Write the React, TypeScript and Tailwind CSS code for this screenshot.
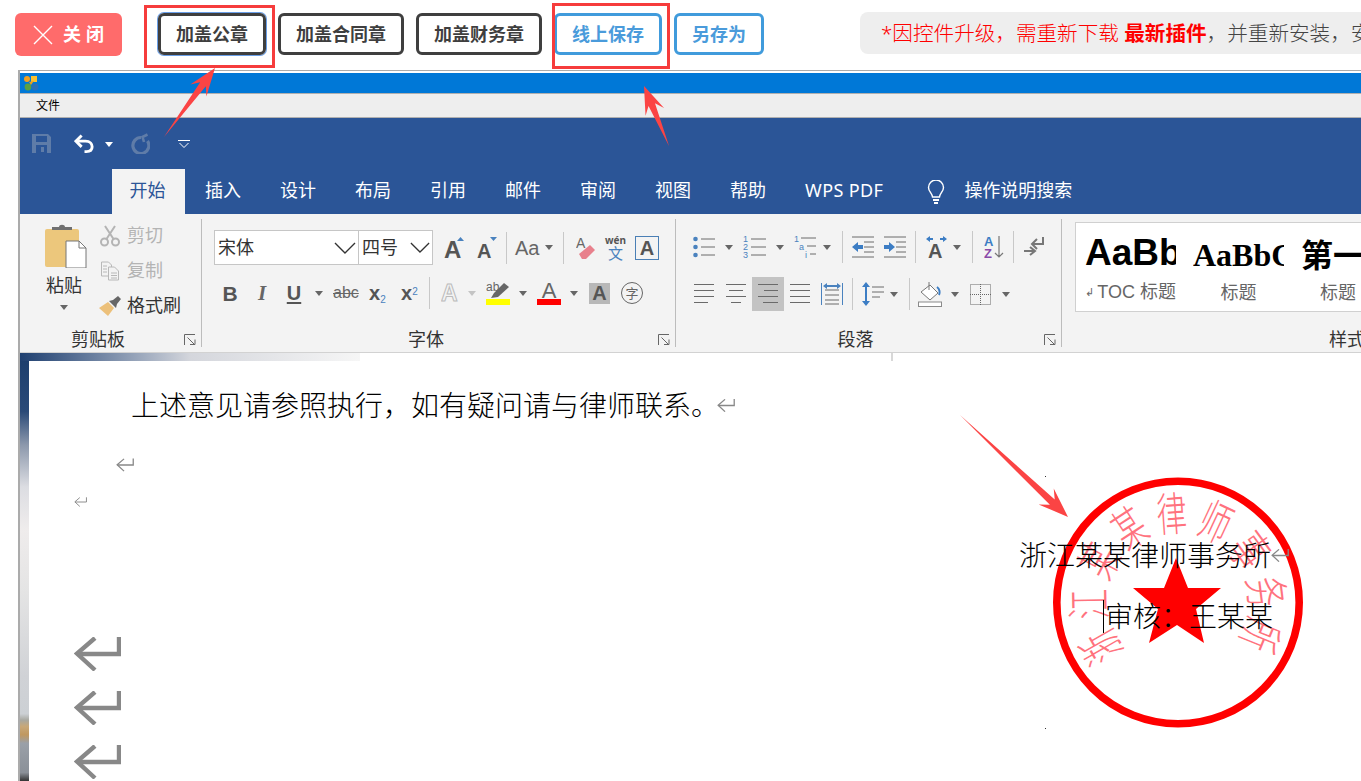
import React from "react";

const Caret = ({ c = "#666", cls = "" }: { c?: string; cls?: string }) => (
  <svg viewBox="0 0 8 5" className={"w-[8px] h-[5px] shrink-0 " + cls}><polygon points="0,0 8,0 4,5" fill={c} /></svg>
);
const Sep = ({ cls }: { cls: string }) => <div className={"w-px h-[32px] shrink-0 bg-[#c8c8c8] " + cls} />;
const RSep = () => <div className="w-px h-[128px] mt-[5px] shrink-0 bg-[#bcbcbc]" />;
const Launcher = ({ cls }: { cls: string }) => (
  <svg viewBox="0 0 12 12" className={"absolute w-[12px] h-[12px] top-[8px] " + cls} fill="none" stroke="#666" strokeWidth="1">
    <path d="M.5 11V.5H11" /><path d="M3.5 3.5l7 7M6 10.5h5v-5" />
  </svg>
);
const Lines = ({ rows, w = 20 }: { rows: [number, number][]; w?: number }) => (
  <svg viewBox={`0 0 ${w} 22`} className="h-[22px] shrink-0" style={{ width: w }} stroke="#6a6a6a" strokeWidth="1">
    {rows.map(([a, b], i) => <line key={i} x1={a} x2={b} y1={1.5 + i * 6} y2={1.5 + i * 6} />)}
  </svg>
);
const Ret = ({ cls, sw = 3.4 }: { cls: string; sw?: number }) => (
  <svg viewBox="0 0 47 34" className={"shrink-0 " + cls} fill="none" stroke="#888" strokeWidth={sw}>
    <path d="M45 0V17H4" /><path d="M21 1L3 16.5 21 33" />
  </svg>
);
const arrow = (x0: number, y0: number, x1: number, y1: number, L: number, W: number, n: number) => {
  const d = Math.hypot(x1 - x0, y1 - y0), ux = (x1 - x0) / d, uy = (y1 - y0) / d, px = -uy, py = ux;
  const P = (back: number, side: number) => `${x1 - ux * back + px * side},${y1 - uy * back + py * side}`;
  return [`${x0},${y0}`, P(L * 0.72, n), P(L, W), `${x1},${y1}`, P(L, -W), P(L * 0.72, -n)].join(" ");
};
const StampChars = "浙江某某律师事务所".split("");

export default function App() {
  return (
    <div className="relative w-[1361px] h-[781px] overflow-hidden bg-white font-['Noto_Sans','Noto_Sans_CJK_SC',sans-serif] text-[#333]">
      {/* toolbar */}
      <div className="flex h-[70px] pt-[13px]">
        <div className="ml-[15px] w-[107px] h-[43px] rounded-[6px] bg-[#ff6b6b] flex items-center text-white font-bold text-[18px] tracking-[5px]">
          <svg viewBox="0 0 20 20" className="ml-[18px] w-[20px] h-[20px]" stroke="#fff" strokeWidth="1.4"><path d="M1 1l18 18M19 1L1 19" /></svg>
          <span className="ml-[10px] whitespace-nowrap">关闭</span>
        </div>
        <div className="ml-[36px] w-[108px] h-[42px] rounded-[6px] border-[3px] border-[#3f3f3f] ring-1 ring-[#6a9fe8] flex items-center justify-center font-bold text-[18px] text-[#3f3f3f]">加盖公章</div>
        <div className="ml-[12px] w-[126px] h-[42px] rounded-[6px] border-[3px] border-[#3f3f3f] flex items-center justify-center font-bold text-[18px] text-[#3f3f3f]">加盖合同章</div>
        <div className="ml-[12px] w-[126px] h-[42px] rounded-[6px] border-[3px] border-[#3f3f3f] flex items-center justify-center font-bold text-[18px] text-[#3f3f3f]">加盖财务章</div>
        <div className="ml-[12px] w-[108px] h-[42px] rounded-[6px] border-[3px] border-[#409bdc] flex items-center justify-center font-bold text-[18px] text-[#4a9bdb]">线上保存</div>
        <div className="ml-[12px] w-[90px] h-[42px] rounded-[6px] border-[3px] border-[#409bdc] flex items-center justify-center font-bold text-[18px] text-[#4a9bdb]">另存为</div>
        <div className="ml-[96px] -mt-[1px] flex-1 h-[42px] rounded-l-[8px] bg-[#eeeeee] pl-[21px] flex items-center overflow-hidden whitespace-nowrap text-[20.6px] font-light text-[#444]">
          <span className="text-[#ff0000]">*因控件升级，需重新下载 <b className="font-bold">最新插件</b></span><span>，并重新安装，安装</span>
        </div>
      </div>

      {/* window */}
      <div className="ml-[18px] border-l-2 border-t border-[#ababab] h-[711px] flex flex-col">
        <div className="h-[2px] bg-white" />
        <div className="h-[20px] bg-[#0078d7] flex items-center pl-[3px] shrink-0">
          <svg viewBox="0 0 16 16" className="w-[16px] h-[16px]">
            <circle cx="4" cy="4" r="3" fill="#f0a020" /><rect x="8" y="1" width="6" height="6" fill="#f8c030" />
            <circle cx="5" cy="12" r="3.4" fill="#5ba040" /><circle cx="12" cy="12" r="3.4" fill="#2a70b8" /><path d="M6 7l5-1-3 4z" fill="#e8a020" />
          </svg>
        </div>
        <div className="h-[25px] shrink-0 bg-[#eeeeee] border-y border-[#b0b0b0] flex items-center pl-[16px] text-[12px] text-black">文件</div>

        {/* blue ribbon head */}
        <div className="h-[96px] shrink-0 bg-[#2b5597] flex flex-col text-white">
          <div className="h-[51px] flex items-center">
            <svg viewBox="0 0 19 19" className="ml-[12px] w-[19px] h-[19px]" fill="#5f7ca8">
              <path fillRule="evenodd" d="M0 0h16l3 3v16H0zM4 2v6h11V2zM4 11v8h11v-8zM9 13h3v5H9z" />
            </svg>
            <svg viewBox="0 0 22 20" className="ml-[23px] w-[21px] h-[20px]" fill="none" stroke="#fff" strokeWidth="3">
              <path d="M8 1L2 7l6 6" /><path d="M3 7h9c5 0 7 3 7 6s-2 5-6 5h-2" />
            </svg>
            <Caret c="#fff" cls="ml-[10px] mt-[2px]" />
            <svg viewBox="0 0 20 21" className="ml-[17px] w-[20px] h-[21px]" fill="none" stroke="#5f7ca8" strokeWidth="3.2">
              <path d="M11 4.500A8 8 0 1 0 17.500 8" /><path d="M17.500 1.500L12.500 4l1.500 5" strokeWidth="2.600" />
            </svg>
            <svg viewBox="0 0 12 8" className="ml-[28px] w-[12px] h-[8px]" fill="none" stroke="#fff" strokeWidth="1"><path d="M0 .5h12M1.5 3l4.5 4.5L10.500 3" /></svg>
          </div>
          <div className="h-[45px] flex items-center text-[18px] ml-[92px]">
            <div className="h-[45px] w-[73px] bg-[#f3f3f3] text-[#2b5597] flex items-center justify-center pr-[2px] pb-[2px]">开始</div>
            <span className="ml-[20px] -mt-[2px]">插入</span>
            <span className="ml-[39px] -mt-[2px]">设计</span>
            <span className="ml-[39px] -mt-[2px]">布局</span>
            <span className="ml-[39px] -mt-[2px]">引用</span>
            <span className="ml-[39px] -mt-[2px]">邮件</span>
            <span className="ml-[39px] -mt-[2px]">审阅</span>
            <span className="ml-[39px] -mt-[2px]">视图</span>
            <span className="ml-[39px] -mt-[2px]">帮助</span>
            <span className="ml-[39px] -mt-[2px] tracking-[.4px] whitespace-nowrap">WPS PDF</span>
            <svg viewBox="0 0 18 24" className="ml-[44px] w-[18px] h-[24px]" fill="none" stroke="#fff" strokeWidth="1.4">
              <path d="M5.500 17C5 13 1.500 11.500 1.500 7.500a7.500 7.500 0 0 1 15 0c0 4-3.500 5.500-4 9.500z" /><path d="M6 20h6M7 23h4" strokeWidth="2" />
            </svg>
            <span className="ml-[19px] -mt-[2px] text-[18px] whitespace-nowrap">操作说明搜索</span>
          </div>
        </div>

        {/* ribbon body */}
        <div className="h-[139px] shrink-0 bg-[#f3f3f3] border-b border-[#d2d2d2] flex text-[#444]">
          {/* clipboard */}
          <div className="relative w-[181px] shrink-0 flex flex-col">
            <div className="flex-1 flex">
              <div className="ml-[25px] w-[38px] flex flex-col items-center">
                <svg viewBox="0 0 42 44" className="mt-[10px] w-[42px] h-[44px] shrink-0 ml-[4px]">
                  <rect x="0" y="5" width="34" height="38" rx="2" fill="#ecc77c" />
                  <path d="M7 6V3h7c0-3 6-3 6 0h7v3z" fill="#707070" />
                  <path d="M21 17h13l7 7v20H21z" fill="#fff" stroke="#777" strokeWidth="1" /><path d="M34 17v7h7" fill="none" stroke="#777" strokeWidth="1" />
                </svg>
                <div className="text-[18px] leading-[24px] mt-[5px] text-[#333] whitespace-nowrap">粘贴</div>
                <Caret cls="mt-[8px]" />
              </div>
              <div className="ml-[17px] flex flex-col mt-[4px] text-[18px]">
                <div className="h-[35px] flex items-center gap-[7px] text-[#b4b4b4] whitespace-nowrap">
                  <svg viewBox="0 0 20 22" className="w-[20px] h-[22px]" fill="none" stroke="#b4b4b4" strokeWidth="2">
                    <circle cx="4.500" cy="17" r="3.500" /><circle cx="15.500" cy="17" r="3.500" /><path d="M6.500 14L15 1M13.500 14L5 1" />
                  </svg>
                  <span>剪切</span>
                </div>
                <div className="h-[35px] flex items-center gap-[7px] text-[#b4b4b4] whitespace-nowrap">
                  <svg viewBox="0 0 20 20" className="w-[20px] h-[20px]" fill="#f3f3f3" stroke="#b8b8b8" strokeWidth="1">
                    <path d="M1.500 1h7l3 3v11h-10z" /><path d="M8.500 6h6l4 4v9h-10z" /><path d="M3 5h4M3 8h4M3 11h4M11 12h6M11 14.500h6M11 17h6" />
                  </svg>
                  <span>复制</span>
                </div>
                <div className="h-[35px] flex items-center gap-[7px] text-[#333] whitespace-nowrap">
                  <svg viewBox="0 0 22 20" className="w-[22px] h-[20px] -ml-[1px]">
                    <path d="M0 12L9 6l6 6-6 8z" fill="#ecc07a" /><path d="M10 5l4-1 5-4 3 3-4 5-1 4z" fill="#666" />
                  </svg>
                  <span className="-ml-[1px]">格式刷</span>
                </div>
              </div>
            </div>
            <div className="h-[26px] flex items-center justify-center text-[18px] text-[#333] pr-[25px] shrink-0 whitespace-nowrap">剪贴板</div>
            <Launcher cls="right-[5px] bottom-[6px] top-auto" />
          </div>
          <RSep />

          {/* font */}
          <div className="relative w-[473px] shrink-0 flex flex-col">
            <div className="flex items-center mt-[16px] h-[35px]">
              <div className="ml-[12px] w-[145px] h-[35px] bg-white border border-[#c6c6c6] flex items-center justify-between pl-[3px] pr-[2px] text-[18px] text-[#333]">
                <span>宋体</span>
                <svg viewBox="0 0 22 12" className="w-[22px] h-[12px]" fill="none" stroke="#333" strokeWidth="1.400"><path d="M1 1l10 10L21 1" /></svg>
              </div>
              <div className="-ml-[1px] w-[75px] h-[35px] bg-white border border-[#c6c6c6] flex items-center justify-between pl-[3px] pr-[2px] text-[18px] text-[#333]">
                <span>四号</span>
                <svg viewBox="0 0 22 12" className="w-[20px] h-[11px]" fill="none" stroke="#333" strokeWidth="1.400"><path d="M1 1l10 10L21 1" /></svg>
              </div>
              <svg viewBox="0 0 20 22" className="ml-[11px] w-[20px] h-[22px]"><text x="0" y="21" fontSize="24" fontWeight="700" fill="#555" fontFamily="'Liberation Sans'">A</text><polygon points="13,4 20,4 16.500,0" fill="#4a82be" /></svg>
              <svg viewBox="0 0 20 22" className="ml-[13px] w-[20px] h-[22px]"><text x="0" y="21" fontSize="20" fontWeight="700" fill="#555" fontFamily="'Liberation Sans'">A</text><polygon points="13,0 20,0 16.500,4" fill="#4a82be" /></svg>
              <Sep cls="ml-[9px]" />
              <span className="ml-[8px] w-[26px] text-[20px] leading-none font-['Liberation_Sans'] text-[#666] whitespace-nowrap">Aa</span>
              <Caret cls="ml-[4px]" />
              <Sep cls="ml-[10px]" />
              <svg viewBox="0 0 20 24" className="ml-[12px] w-[20px] h-[24px]">
                <text x="0" y="12" fontSize="14" fill="#666" fontFamily="'Liberation Sans'">A</text>
                <path d="M3 18l11-9 5 5-9 9H6z" fill="#e8808c" />
              </svg>
              <div className="ml-[9px] w-[21px] h-[26px] flex flex-col items-center leading-none whitespace-nowrap">
                <span className="text-[10px] font-bold text-[#555] leading-[11px]">wén</span>
                <span className="text-[15px] text-[#4a82be] leading-[15px]">文</span>
              </div>
              <div className="ml-[9px] w-[24px] h-[24px] border border-[#4a7fb5] flex items-center justify-center font-bold font-['Liberation_Sans'] text-[20px] leading-none text-[#555]">A</div>
            </div>
            <div className="flex items-center mt-[11px] h-[34px]">
              <span className="ml-[20px] w-[16px] text-center font-bold font-['Liberation_Sans'] text-[21px] leading-none text-[#555]">B</span>
              <span className="ml-[16px] w-[16px] text-center italic font-bold font-['Liberation_Serif'] text-[21px] leading-none text-[#666]">I</span>
              <span className="ml-[16px] w-[16px] text-center underline underline-offset-2 font-bold font-['Liberation_Sans'] text-[20px] leading-none text-[#555]">U</span>
              <Caret cls="ml-[13px]" />
              <span className="ml-[10px] w-[24px] text-center line-through font-['Liberation_Sans'] text-[16px] leading-none text-[#666]">abc</span>
              <span className="ml-[12px] w-[20px] whitespace-nowrap font-bold font-['Liberation_Sans'] text-[20px] leading-none text-[#555]">x<sub className="text-[10px] font-normal text-[#4a82be]">2</sub></span>
              <span className="ml-[12px] w-[20px] whitespace-nowrap font-bold font-['Liberation_Sans'] text-[20px] leading-none text-[#555]">x<sup className="text-[10px] font-normal text-[#4a82be]">2</sup></span>
              <Sep cls="ml-[8px]" />
              <svg viewBox="0 0 18 20" className="ml-[11px] w-[18px] h-[20px]"><text x="0" y="18" fontSize="23" fontWeight="700" fill="#f3f3f3" stroke="#bbb" strokeWidth="1" fontFamily="'Liberation Sans'">A</text></svg>
              <Caret c="#c4c4c4" cls="ml-[9px]" />
              <div className="ml-[10px] w-[24px] h-[24px] flex flex-col">
                <svg viewBox="0 0 24 18" className="w-[24px] h-[18px]"><text x="0" y="10" fontSize="12" fill="#666" fontFamily="'Liberation Sans'">ab</text><path d="M5 17l3-5 10-10 5 4-11 10z" fill="#666" /></svg>
                <div className="h-[6px] bg-[#ffff00]" />
              </div>
              <Caret cls="ml-[9px]" />
              <div className="ml-[10px] w-[24px] h-[24px] flex flex-col items-center">
                <span className="h-[18px] font-['Liberation_Sans'] text-[22px] leading-[20px] text-[#666]">A</span>
                <div className="w-full h-[6px] bg-[#ff0000]" />
              </div>
              <Caret cls="ml-[9px]" />
              <div className="ml-[11px] w-[21px] h-[21px] bg-[#b8b8b8] flex items-center justify-center font-bold font-['Liberation_Sans'] text-[20px] leading-none text-[#555]">A</div>
              <div className="ml-[11px] w-[22px] h-[22px] rounded-full border border-[#666] flex items-center justify-center text-[13px] leading-none text-[#666]">字</div>
            </div>
            <div className="flex-1" />
            <div className="h-[26px] flex items-center justify-center text-[18px] text-[#333] pr-[25px] shrink-0">字体</div>
            <Launcher cls="right-[5px] bottom-[6px] top-auto" />
          </div>
          <RSep />

          {/* paragraph */}
          <div className="relative w-[385px] shrink-0 flex flex-col">
            <div className="flex items-center mt-[16px] h-[34px]">
              <svg viewBox="0 0 22 22" className="ml-[17px] w-[22px] h-[22px]" stroke="#6a6a6a"><circle cx="2.500" cy="3" r="2.300" fill="#4a82be" stroke="none" /><circle cx="2.500" cy="11" r="2.300" fill="#4a82be" stroke="none" /><circle cx="2.500" cy="19" r="2.300" fill="#4a82be" stroke="none" /><path d="M8 3h14M8 11h14M8 19h14" /></svg>
              <Caret cls="ml-[10px]" />
              <svg viewBox="0 0 23 24" className="ml-[10px] w-[23px] h-[24px]" stroke="#6a6a6a"><g fill="#4a82be" stroke="none" fontSize="9" fontFamily="'Liberation Sans'"><text x="0" y="7">1</text><text x="0" y="15">2</text><text x="0" y="23">3</text></g><path d="M8 4h15M8 12h15M8 20h15" /></svg>
              <Caret cls="ml-[10px]" />
              <svg viewBox="0 0 23 24" className="ml-[10px] w-[23px] h-[24px]" stroke="#6a6a6a"><g fill="#4a82be" stroke="none" fontSize="9" fontFamily="'Liberation Sans'"><text x="0" y="7">1</text><text x="5" y="15">a</text><text x="11" y="23">i</text></g><path d="M7 3h15M13 11h9M16 19h6" /></svg>
              <Caret cls="ml-[6px]" />
              <Sep cls="ml-[11px]" />
              <svg viewBox="0 0 22 22" className="ml-[9px] w-[22px] h-[22px]" stroke="#6a6a6a"><path d="M0 1h22M12 6h10M12 11h10M12 16h10M0 21h22" /><path d="M0 11l6-5v3h5v4H6v3z" fill="#3c7dc4" stroke="none" /></svg>
              <svg viewBox="0 0 22 22" className="ml-[10px] w-[22px] h-[22px]" stroke="#6a6a6a"><path d="M0 1h22M12 6h10M12 11h10M12 16h10M0 21h22" /><path d="M11 11L5 6v3H0v4h5v3z" fill="#3c7dc4" stroke="none" /></svg>
              <Sep cls="ml-[9px]" />
              <svg viewBox="0 0 23 22" className="ml-[9px] w-[23px] h-[22px]"><text x="3" y="22" fontSize="20" fontWeight="700" fill="#555" fontFamily="'Liberation Sans'">A</text><path d="M1 3l4-3v2h3v2H5v2zM22 3l-4-3v2h-3v2h3v2z" fill="#3c7dc4" /></svg>
              <Caret cls="ml-[5px]" />
              <Sep cls="ml-[11px]" />
              <svg viewBox="0 0 20 24" className="ml-[11px] w-[20px] h-[24px]"><text x="0" y="11" fontSize="13" fontWeight="700" fill="#3c7dc4" fontFamily="'Liberation Sans'">A</text><text x="0" y="23" fontSize="13" fontWeight="700" fill="#8a4aa8" fontFamily="'Liberation Sans'">Z</text><path d="M15 1v21M11 18l4 4 4-4" fill="none" stroke="#777" strokeWidth="1.200" /></svg>
              <Sep cls="ml-[9px]" />
              <svg viewBox="0 0 20 20" className="ml-[10px] w-[20px] h-[20px]" fill="none" stroke="#777" strokeWidth="2">
                <path d="M19 0v7H9" /><path d="M13 2L8 7l5 5" /><path d="M0 14h10" /><path d="M6 10l5 4-5 4" />
              </svg>
            </div>
            <div className="flex items-center mt-[13px] h-[34px]">
              <div className="ml-[18px]"><Lines rows={[[0, 20], [0, 20], [0, 20], [0, 14]]} /></div>
              <div className="ml-[12px]"><Lines rows={[[0, 20], [3, 17], [0, 20], [5, 15]]} /></div>
              <div className="ml-[6px] w-[32px] h-[34px] bg-[#c3c3c3] flex items-center justify-center"><Lines rows={[[0, 20], [6, 20], [0, 20], [5, 20]]} /></div>
              <div className="ml-[6px]"><Lines rows={[[0, 20], [0, 20], [0, 20], [0, 20]]} /></div>
              <svg viewBox="0 0 22 22" className="ml-[11px] w-[22px] h-[22px]" stroke="#6a6a6a"><path d="M.5 0v22M21.500 0v22" stroke="#4a82be" /><path d="M4 7h14M4 12h14M4 17h14M4 21h14" /><path d="M2 3l4-3v2h10V0l4 3-4 3V4H6v2z" fill="#4a82be" stroke="none" /></svg>
              <Sep cls="ml-[9px]" />
              <svg viewBox="0 0 22 24" className="ml-[9px] w-[22px] h-[24px]" stroke="#6a6a6a"><path d="M4 0l4 5H5v14h3l-4 5-4-5h3V5H0z" fill="#3c7dc4" stroke="none" /><path d="M10 5h12M10 10h12M10 15h8" /></svg>
              <Caret cls="ml-[6px]" />
              <Sep cls="ml-[11px]" />
              <svg viewBox="0 0 24 26" className="ml-[8px] w-[24px] h-[26px]"><path d="M3 11l9-7 8 8-8 7z" fill="#fff" stroke="#777" /><path d="M11 1v8" stroke="#777" /><path d="M19 6c3 2 3 6 2 8" fill="none" stroke="#3c7dc4" strokeWidth="2" /><rect x=".5" y="21" width="23" height="4.500" fill="#fff" stroke="#8a8a8a" /></svg>
              <Caret cls="ml-[9px]" />
              <svg viewBox="0 0 21 21" className="ml-[11px] w-[21px] h-[21px]" fill="none" stroke="#666" strokeDasharray="1 1"><rect x=".5" y=".5" width="20" height="20" /><path d="M10.500 0v21M0 10.500h21" /></svg>
              <Caret cls="ml-[11px]" />
            </div>
            <div className="flex-1" />
            <div className="h-[26px] flex items-center justify-center text-[18px] text-[#333] pr-[26px] shrink-0">段落</div>
            <Launcher cls="right-[5px] bottom-[6px] top-auto" />
          </div>
          <RSep />

          {/* styles */}
          <div className="flex-1 min-w-0 flex flex-col overflow-hidden">
            <div className="ml-[13px] mt-[8px] h-[90px] -mr-[4px] bg-white border border-[#d0d0d0] flex pl-[9px] shrink-0">
              <div className="w-[91px] shrink-0 flex flex-col overflow-hidden">
                <div className="mt-[4px] h-[50px] flex items-center whitespace-nowrap font-bold font-['Liberation_Sans'] text-[37px] leading-none text-black">AaBbCc</div>
                <div className="mt-[3px] h-[24px] flex items-center whitespace-nowrap text-[18px] text-[#666] font-['Liberation_Sans','Noto_Sans_CJK_SC',sans-serif]"><span className="text-[11px] w-[14px]">↲</span>TOC 标题</div>
              </div>
              <div className="ml-[17px] w-[91px] shrink-0 flex flex-col overflow-hidden">
                <div className="mt-[7px] h-[50px] flex items-center whitespace-nowrap font-bold font-['Liberation_Serif'] text-[32px] leading-none text-black">AaBbCc</div>
                <div className="h-[24px] flex items-center justify-center text-[18px] text-[#666]">标题</div>
              </div>
              <div className="ml-[17px] w-[74px] shrink-0 flex flex-col">
                <div className="mt-[7px] h-[50px] flex items-center whitespace-nowrap font-bold text-[32px] leading-none text-black">第一</div>
                <div className="h-[24px] flex items-center justify-center text-[18px] text-[#666]">标题</div>
              </div>
            </div>
            <div className="flex-1" />
            <div className="h-[26px] flex items-center pl-[267px] whitespace-nowrap text-[18px] text-[#333] shrink-0">样式</div>
          </div>
        </div>

        {/* document */}
        <div className="flex-1 min-h-0 flex flex-col bg-white">
          <div className="h-[8px] shrink-0 flex">
            <div className="w-[340px] h-full bg-gradient-to-r from-[#1f4070] via-[#d4d6dc] to-[#f6f6f6]" />
            <div className="ml-[531px] w-[2px] h-full bg-[#d8d8d8]" />
          </div>
          <div className="flex-1 min-h-0 flex">
            <div className="w-[9px] shrink-0 bg-[linear-gradient(to_bottom,#1d3f6e_0%,#2a4a78_12%,#8c98ac_20%,#dcdde2_30%,#efecec_40%,#e4e4e4_55%,#d0d2d6_75%,#ccd0d4_84%,#a8a8a0_85.5%,#c8a878_87%,#c09860_89%,#9aa0a8_91%,#8a9098_98%,#333_100%)]" />
            <div className="relative flex-1 min-w-0 text-black text-[28px] leading-[38px] font-light">
              <svg viewBox="1000 460 320 280" className="absolute left-[971px] top-[99px] w-[320px] h-[280px]">
                <circle cx="1178" cy="602.500" r="121.200" fill="none" stroke="#ff0000" strokeWidth="7.600" />
                <polygon points="1176,558 1188,588 1221,588 1196,609 1204,643 1177,625 1149,643 1158,609 1133,588 1164,588" fill="#ff0000" />
                {StampChars.map((ch, i) => {
                  const a = -120 + i * 29, r = (a * Math.PI) / 180;
                  const x = 1178 + 90 * Math.sin(r), y = 602.5 - 90 * Math.cos(r);
                  return (
                    <text key={i} transform={`translate(${x},${y}) rotate(${a}) scale(.82,1.25)`} textAnchor="middle" dominantBaseline="central" fontSize="37" fill="#ff5a68" opacity=".85">{ch}</text>
                  );
                })}
                <rect x="1045" y="476" width="1" height="1" fill="#333" /><rect x="1045" y="728" width="1" height="1" fill="#333" />
              </svg>
              <div className="relative flex flex-col">
                <div className="mt-[24px] h-[40px] pl-[102px] flex items-center whitespace-nowrap">
                  上述意见请参照执行，如有疑问请与律师联系。<Ret cls="w-[18px] h-[13px] -ml-[2px]" />
                </div>
                <div className="mt-[31px] h-[18px] pl-[87px] flex items-center"><Ret cls="w-[18px] h-[14px]" /></div>
                <div className="mt-[20px] h-[15px] pl-[45px] flex items-center"><Ret cls="w-[13px] h-[10px]" /></div>
                <div className="mt-[27px] h-[38px] pr-[72px] flex items-center justify-end whitespace-nowrap">
                  浙江某某律师事务所<Ret cls="w-[18px] h-[13px]" />
                </div>
                <div className="mt-[23px] h-[38px] pr-[88px] flex items-center justify-end whitespace-nowrap">
                  <div className="w-px h-[33px] bg-black mr-[1px]" />审核：王某某
                </div>
                <Ret sw={4.4} cls="mt-[2px] ml-[45px] w-[47px] h-[34px]" />
                <Ret sw={4.4} cls="mt-[20px] ml-[45px] w-[47px] h-[34px]" />
                <Ret sw={4.4} cls="mt-[20px] ml-[45px] w-[47px] h-[34px]" />
              </div>
            </div>
          </div>
        </div>
      </div>

      {/* annotations */}
      <div className="absolute left-[144px] top-[5px] w-[131px] h-[63px] border-[3px] border-[#f63c3c]" />
      <div className="absolute left-[552px] top-[3px] w-[118px] h-[66px] border-[3px] border-[#f63c3c]" />
      <svg viewBox="0 0 1361 781" className="absolute left-0 top-0 w-[1361px] h-[781px] pointer-events-none" fill="#fb4444">
        <polygon points={arrow(164, 137, 215, 68, 28, 10, 3.5)} />
        <polygon points={arrow(669, 146, 644, 86, 28, 10, 3.5)} />
        <polygon points={arrow(960, 415, 1068, 517, 30, 11, 3.5)} />
      </svg>
    </div>
  );
}
